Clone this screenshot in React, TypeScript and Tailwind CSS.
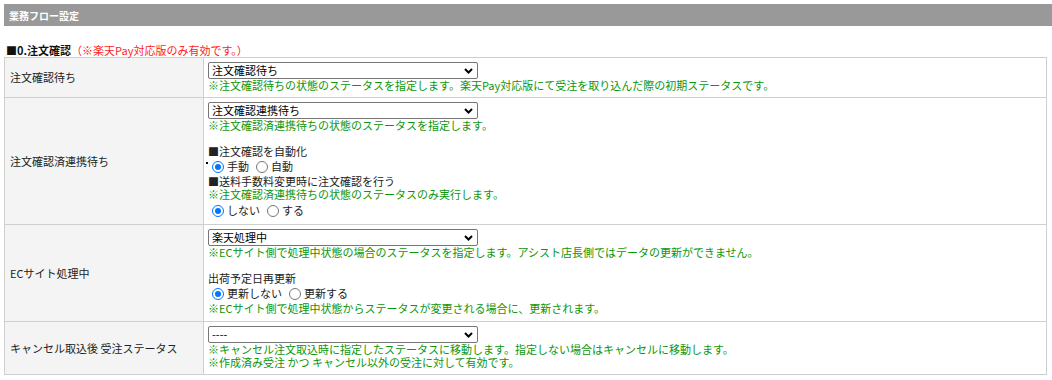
import React from "react";

const FONT = { fontFamily: '"Noto Sans CJK JP", "Liberation Sans", sans-serif' };

function Select({ value }: { value: string }) {
  return (
    <div className="flex h-[17px] w-[270px] items-center justify-between rounded-[2px] border border-[#767676] bg-white pl-[3px] pr-[4px] text-[11px] leading-[15px] text-black">
      <span>{value}</span>
      <svg width="9" height="6" viewBox="0 0 9 6">
        <path d="M1 1 L4.5 4.5 L8 1" fill="none" stroke="#000" strokeWidth="2" />
      </svg>
    </div>
  );
}

function Radio({ checked }: { checked: boolean }) {
  return checked ? (
    <span className="inline-flex h-[12px] w-[12px] items-center justify-center rounded-full border-[1.5px] border-[#0075ff] bg-white">
      <span className="h-[6px] w-[6px] rounded-full bg-[#0075ff]" />
    </span>
  ) : (
    <span className="inline-block h-[12px] w-[12px] rounded-full border border-[#767676] bg-white" />
  );
}

function RadioRow({ a, b, dot = false }: { a: string; b: string; dot?: boolean }) {
  return (
    <div className="relative flex h-[17px] items-center pl-[4px] text-[11px] leading-[13px] text-[#222]">
      {dot && <span className="absolute left-[-2px] top-[4px] h-[2px] w-[2px] bg-black" />}
      <Radio checked />
      <span className="ml-[3px] mr-[7px]">{a}</span>
      <Radio checked={false} />
      <span className="ml-[3px]">{b}</span>
    </div>
  );
}

function Note({ children }: { children: React.ReactNode }) {
  return <div className="h-[13px] text-[11px] leading-[13px] text-[#0c960c] whitespace-nowrap">{children}</div>;
}

function Plain({ children }: { children: React.ReactNode }) {
  return <div className="h-[13px] text-[11px] leading-[13px] text-[#222] whitespace-nowrap">{children}</div>;
}

function Row({ label, children }: { label: string; children: React.ReactNode }) {
  return (
    <tr>
      <td className="w-[199px] border border-[#cfcfcf] bg-[#f3f4f3] px-[5px] align-middle text-[11px] leading-[13px] text-[#222]">
        {label}
      </td>
      <td className="border border-[#cfcfcf] bg-white pl-[4px] pt-[4px] pb-[5px] align-top">{children}</td>
    </tr>
  );
}

export default function App() {
  return (
    <div className="w-[1052px] h-[380px] overflow-hidden bg-white pl-[4px] pt-[4px]" style={FONT}>
      <div className="flex h-[22px] items-center bg-[#999999] pl-[5px] text-[10px] font-bold text-white">
        業務フロー設定
      </div>
      <div className="mt-[18px] h-[13px] pl-[2px] text-[11px] leading-[13px] text-[#111]">
        <span className="font-bold">■0.注文確認</span>
        <span className="text-[#ff2222]">（※楽天Pay対応版のみ有効です。）</span>
      </div>
      <table className="w-[1043px] border-collapse">
        <tbody>
          <Row label="注文確認待ち">
            <Select value="注文確認待ち" />
            <Note>※注文確認待ちの状態のステータスを指定します。楽天Pay対応版にて受注を取り込んだ際の初期ステータスです。</Note>
          </Row>
          <Row label="注文確認済連携待ち">
            <Select value="注文確認連携待ち" />
            <Note>※注文確認済連携待ちの状態のステータスを指定します。</Note>
            <div className="h-[13px]" />
            <Plain>■注文確認を自動化</Plain>
            <RadioRow a="手動" b="自動" dot />
            <Plain>■送料手数料変更時に注文確認を行う</Plain>
            <Note>※注文確認済連携待ちの状態のステータスのみ実行します。</Note>
            <div className="mt-[1px]">
              <RadioRow a="しない" b="する" />
            </div>
          </Row>
          <Row label="ECサイト処理中">
            <Select value="楽天処理中" />
            <Note>※ECサイト側で処理中状態の場合のステータスを指定します。アシスト店長側ではデータの更新ができません。</Note>
            <div className="h-[13px]" />
            <Plain>出荷予定日再更新</Plain>
            <RadioRow a="更新しない" b="更新する" />
            <Note>※ECサイト側で処理中状態からステータスが変更される場合に、更新されます。</Note>
            <div className="h-[1px]" />
          </Row>
          <Row label="キャンセル取込後 受注ステータス">
            <Select value="----" />
            <Note>※キャンセル注文取込時に指定したステータスに移動します。指定しない場合はキャンセルに移動します。</Note>
            <Note>※作成済み受注 かつ キャンセル以外の受注に対して有効です。</Note>
          </Row>
        </tbody>
      </table>
    </div>
  );
}
